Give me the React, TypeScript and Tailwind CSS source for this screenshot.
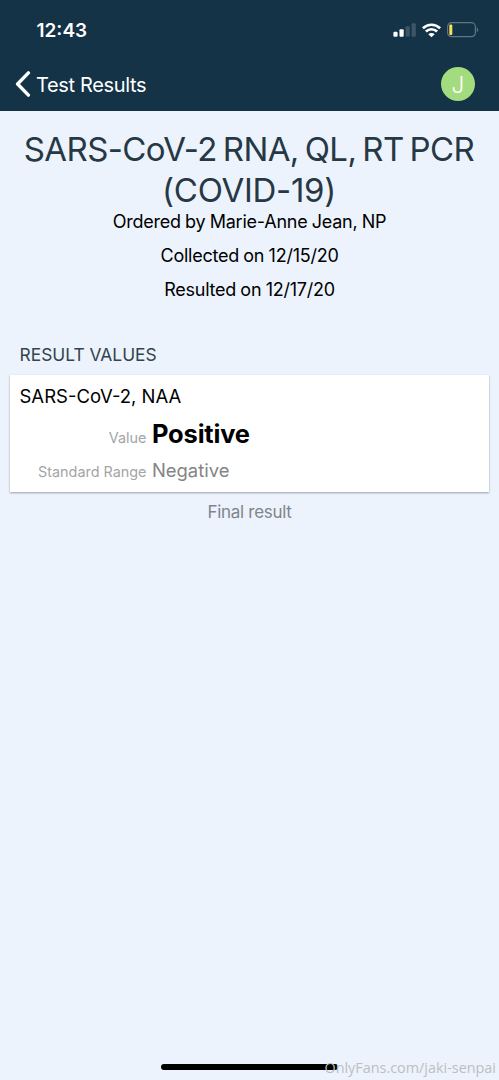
import React from 'react';

interface ResultRowProps {
  label: string;
  children: React.ReactNode;
}

const SignalIcon: React.FC = () => (
  <svg width="24" height="16" viewBox="0 0 24 16" aria-label="Signal">
    <rect x="0.4" y="9.8" width="4.2" height="5" rx="1.1" fill="#fff" />
    <rect x="6.5" y="7.2" width="4.2" height="7.6" rx="1.1" fill="#fff" />
    <rect x="12.6" y="4.2" width="4.2" height="10.6" rx="1.1" fill="#3d5666" />
    <rect x="18.6" y="1.2" width="4.2" height="13.6" rx="1.1" fill="#3d5666" />
  </svg>
);

const WifiIcon: React.FC = () => (
  <svg width="20" height="15" viewBox="0 0 20 15" fill="none" stroke="#fff" aria-label="Wi-Fi">
    <path d="M0.9 5.2C5.9.6 13.1.6 18.1 5.2" strokeWidth="2.7" />
    <path d="M3.9 8.5C7.1 5.5 11.9 5.5 15.1 8.5" strokeWidth="2.7" />
    <path d="M9.5 14.3L6.3 11.2C8.1 9.5 10.9 9.5 12.7 11.2Z" fill="#fff" stroke="none" />
  </svg>
);

const BatteryIcon: React.FC = () => (
  <svg width="32" height="16" viewBox="0 0 32 16" aria-label="Battery">
    <rect x="0.6" y="0.7" width="27.8" height="14" rx="4" fill="none" stroke="#62767f" strokeWidth="1.2" />
    <rect x="2.3" y="2.6" width="3" height="10.4" rx="1" fill="#fbdf55" />
    <path d="M29.8 5.4C31.6 6.1 31.6 9.3 29.8 10Z" fill="#62767f" />
  </svg>
);

const StatusBar: React.FC = () => (
  <div className="flex h-[60px] items-center justify-between pl-[36.5px] pr-5">
    <span className="pt-0.5 text-[19px] font-semibold">12:43</span>
    <div className="flex items-center gap-[5px]">
      <SignalIcon />
      <WifiIcon />
      <BatteryIcon />
    </div>
  </div>
);

const ResultRow: React.FC<ResultRowProps> = ({ label, children }) => (
  <div className="flex items-baseline">
    <span className="w-[136.5px] shrink-0 text-right text-[14.4px] leading-5 text-[#a4a5a7]">{label}</span>
    {children}
  </div>
);

const App: React.FC = () => {
  return (
    <div className="flex h-[1080px] w-full flex-col bg-[#ecf3fc] font-['Inter','Liberation_Sans',sans-serif] text-black">
      <header className="h-[111px] shrink-0 bg-[#143347] text-white">
        <StatusBar />
        <div className="flex h-[48px] items-center justify-between pl-[15px] pr-6">
          <button className="flex items-center gap-[5px]">
            <svg width="16" height="26" viewBox="0 0 16 26" fill="none" stroke="#fff" strokeWidth="3.4" aria-hidden="true">
              <path d="M13.4 1.9L2.6 13L13.4 24.1" strokeLinecap="round" strokeLinejoin="round" />
            </svg>
            <span className="pt-px text-[20px] tracking-[-0.35px]">Test Results</span>
          </button>
          <div className="flex size-[34px] items-center justify-center rounded-full bg-[#a3dc7f] pt-px text-[22.5px] font-light">
            J
          </div>
        </div>
      </header>

      <main className="flex-1 px-2.5 pt-[18px]">
        <section className="text-center">
          <h1 className="text-[33px] leading-[41px] text-[#273845]">
            <span className="block pr-px tracking-[-0.6px] whitespace-nowrap [word-spacing:-2.7px]">SARS-CoV-2 RNA, QL, RT PCR</span>
            <span className="block pr-px tracking-[-0.3px]">(COVID-19)</span>
          </h1>
          <div className="flex flex-col gap-3 text-[18px] leading-[22px] tracking-[-0.24px] [word-spacing:-0.5px]">
            <p>Ordered by Marie-Anne Jean, NP</p>
            <p>Collected on 12/15/20</p>
            <p>Resulted on 12/17/20</p>
          </div>
        </section>

        <section>
          <h2 className="mt-[43px] pl-[9.5px] text-[17.4px] leading-[22px] text-[#33434f]">RESULT VALUES</h2>
          <div className="mt-[8.5px] h-[117px] bg-white pt-2.5 shadow-[0_1px_2px_rgba(0,0,0,0.35)]">
            <h3 className="pl-[9.5px] text-[18.5px] leading-[22px]">SARS-CoV-2, NAA</h3>
            <div className="mt-3 flex flex-col gap-2.5">
              <ResultRow label="Value">
                <span className="ml-[5.5px] text-[25.5px] leading-[30px] font-bold tracking-[-0.2px]">Positive</span>
              </ResultRow>
              <ResultRow label="Standard Range">
                <span className="ml-[5.5px] text-[18.4px] leading-[22px] text-[#838485]">Negative</span>
              </ResultRow>
            </div>
          </div>
          <p className="mt-[9.5px] text-center text-[17px] leading-[22px] tracking-[-0.3px] text-[#7e858d]">Final result</p>
        </section>
      </main>

      <footer className="relative h-5 shrink-0">
        <div className="mx-auto mt-1 h-1.5 w-[177px] rounded-full bg-black" />
        <span className="absolute right-[3px] bottom-[2px] font-['Open_Sans','Noto_Sans',sans-serif] text-[14.4px] leading-5 text-[#bbbfc4]">
          OnlyFans.com/jaki-senpai
        </span>
      </footer>
    </div>
  );
};

export default App;
